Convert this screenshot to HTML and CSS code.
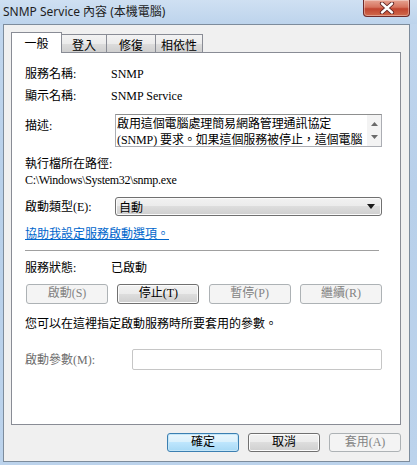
FILE: index.html
```html
<!DOCTYPE html>
<html>
<head>
<meta charset="utf-8">
<link rel="stylesheet" href="styles.css">
</head>
<body>
<div class="window">
  <div class="titlebar">
    <div class="title">SNMP Service 內容 (本機電腦)</div>
    <div class="close"><svg width="16" height="12" viewBox="0 0 16 12"><path d="M3 1.5 L13 10.5 M13 1.5 L3 10.5" stroke="#5a2020" stroke-width="4.2" stroke-linecap="round"/><path d="M3 1.5 L13 10.5 M13 1.5 L3 10.5" stroke="#fff" stroke-width="2.4" stroke-linecap="round"/></svg></div>
  </div>
  <div class="client">
    <div class="tabs">
      <div class="tab sel t1">一般</div>
      <div class="tab t2">登入</div>
      <div class="tab t3">修復</div>
      <div class="tab t4">相依性</div>
    </div>
    <div class="panel">
      <div class="row r-name"><span class="lbl">服務名稱:</span><span class="val">SNMP</span></div>
      <div class="row r-disp"><span class="lbl">顯示名稱:</span><span class="val">SNMP Service</span></div>
      <div class="row r-desc">
        <span class="lbl lbl-desc">描述:</span>
        <div class="desc">
          <div class="desc-text">啟用這個電腦處理簡易網路管理通訊協定<br>(SNMP) 要求。如果這個服務被停止，這個電腦</div>
          <div class="vscroll">
            <svg width="7" height="4" viewBox="0 0 7 4"><path d="M0 4 L3.5 0 L7 4Z" fill="#6a6a6a"/></svg>
            <svg width="7" height="4" viewBox="0 0 7 4"><path d="M0 0 L3.5 4 L7 0Z" fill="#6a6a6a"/></svg>
          </div>
        </div>
      </div>
      <div class="row r-pathlbl">執行檔所在路徑:</div>
      <div class="row r-path">C:\Windows\System32\snmp.exe</div>
      <div class="row r-type"><span class="lbl">啟動類型(E):</span>
        <div class="combo"><span>自動</span><svg width="8" height="5" viewBox="0 0 8 5"><path d="M0 0 L8 0 L4 5Z" fill="#1a1a1a"/></svg></div>
      </div>
      <div class="row r-link"><a class="link">協助我設定服務啟動選項。</a></div>
      <div class="sep"></div>
      <div class="row r-status"><span class="lbl">服務狀態:</span><span class="val">已啟動</span></div>
      <div class="btnrow">
        <div class="btn dis">啟動(S)</div>
        <div class="btn">停止(T)</div>
        <div class="btn dis">暫停(P)</div>
        <div class="btn dis">繼續(R)</div>
      </div>
      <div class="row r-hint">您可以在這裡指定啟動服務時所要套用的參數。</div>
      <div class="row r-param"><span class="lbl dlbl">啟動參數(M):</span><div class="input"></div></div>
    </div>
    <div class="footer">
      <div class="btn def">確定</div>
      <div class="btn">取消</div>
      <div class="btn dis">套用(A)</div>
    </div>
  </div>
</div>
</body>
</html>
```
FILE: styles.css
```css
* { box-sizing: border-box; }
html, body { margin: 0; padding: 0; }
body {
  width: 417px;
  height: 465px;
  overflow: hidden;
  background: linear-gradient(180deg, #c2d7ee 0%, #b8d0ea 40%, #bcd3ec 100%);
  font-family: "Liberation Serif", "Noto Sans CJK TC", serif;
  font-size: 12px;
  color: #000;
}
.window {
  display: flex;
  flex-direction: column;
  height: 465px;
}
.titlebar {
  height: 24px;
  display: flex;
  justify-content: space-between;
  align-items: flex-start;
  background: linear-gradient(180deg, #cfe0f2 0%, #bdd4ec 100%);
}
.title {
  padding: 5px 0 0 3px;
  font-family: "Noto Sans", "Noto Sans CJK TC", sans-serif;
  font-size: 12px;
  line-height: 14px;
  color: #1e1e1e;
}
.close {
  width: 47px;
  height: 17px;
  margin-right: 7px;
  border: 1px solid #6e2a2a;
  border-top: none;
  border-radius: 0 0 4px 4px;
  background: linear-gradient(180deg, #e6a392 0%, #d6735e 45%, #c14530 55%, #d06a4c 100%);
  display: flex;
  align-items: center;
  justify-content: center;
  box-shadow: inset 0 0 0 1px rgba(255,255,255,0.35);
}
.client {
  flex: 1;
  margin: 0 7px 3px 3px;
  border: 1px solid #7d8c9c;
  background: #f0f0f0;
  padding: 7px 8px 0 7px;
  display: flex;
  flex-direction: column;
}
.tabs {
  display: flex;
  align-items: flex-end;
  height: 20px;
}
.tab {
  height: 18px;
  border: 1px solid #898c95;
  border-bottom: none;
  border-left: none;
  background: linear-gradient(180deg, #f3f3f3 0%, #ebebeb 50%, #dddddd 50%, #cfcfcf 100%);
  font-family: "Noto Sans CJK TC", sans-serif;
  font-size: 12px;
  line-height: 17px;
  text-align: center;
  padding-top: 1px;
}
.tab.sel {
  height: 21px;
  border-left: 1px solid #898c95;
  background: #fff;
  position: relative;
  z-index: 1;
  margin-bottom: -1px;
  line-height: 18px;
}
.t1 { width: 51px; }
.t2 { width: 45px; }
.t3 { width: 49px; }
.t4 { width: 47px; }
.panel {
  height: 373px;
  border: 1px solid #898c95;
  background: #fff;
  padding: 13px 18px 0 13px;
  display: flex;
  flex-direction: column;
}
.row {
  height: 16px;
  line-height: 16px;
  display: flex;
  align-items: center;
  white-space: nowrap;
}
.lbl {
  width: 86px;
  flex: none;
}
.r-name { margin-bottom: 6px; }
.r-disp { margin-bottom: 10px; }
.r-desc {
  height: 33px;
  align-items: flex-start;
  margin-bottom: 9px;
}
.lbl-desc { width: 90px; padding-top: 4px; }
.desc {
  flex: 1;
  height: 33px;
  border: 1px solid #abadb3;
  border-top-color: #8e8f8f;
  display: flex;
  background: #fff;
}
.desc-text {
  flex: 1;
  height: 31px;
  padding: 1px 0 0 1px;
  line-height: 16px;
  font-size: 12px;
  white-space: nowrap;
  letter-spacing: -0.1px;
}
.vscroll {
  width: 14px;
  background: #f3f3f3;
  display: flex;
  flex-direction: column;
  align-items: center;
  justify-content: space-between;
  padding: 7px 0 7px 0;
}
.r-path { margin-bottom: 9px; font-size: 12px; letter-spacing: -0.3px; }
.r-type { height: 19px; margin-bottom: 9px; }
.r-type .lbl { width: 90px; }
.combo {
  flex: 1;
  height: 19px;
  border: 1px solid #707070;
  border-radius: 3px;
  background: linear-gradient(180deg, #f2f2f2 0%, #ebebeb 50%, #dddddd 50%, #cfcfcf 100%);
  box-shadow: inset 0 0 0 1px #fbfbfb;
  display: flex;
  align-items: center;
  justify-content: space-between;
  padding: 0 6px 0 3px;
  font-family: "Noto Sans CJK TC", sans-serif;
  line-height: 17px;
}
.r-link { margin-bottom: 9px; }
.link {
  color: #0066cc;
  text-decoration: underline;
  font-family: "Noto Sans CJK TC", sans-serif;
}
.sep {
  height: 1px;
  width: 354px;
  background: #a0a0a0;
  margin-bottom: 9px;
}
.r-status { margin-bottom: 8px; }
.btnrow {
  display: flex;
  justify-content: space-between;
  height: 20px;
  margin: 0 0 12px 1px;
}
.btnrow .btn { width: 82px; }
.btn {
  height: 20px;
  border: 1px solid #707070;
  border-radius: 3px;
  background: linear-gradient(180deg, #f2f2f2 0%, #ebebeb 50%, #dddddd 50%, #cfcfcf 100%);
  box-shadow: inset 0 0 0 1px #fcfcfc;
  text-align: center;
  line-height: 17px;
  font-size: 12px;
  white-space: nowrap;
}
.btn.dis {
  border-color: #adb2b5;
  background: #f4f4f4;
  box-shadow: none;
  color: #838383;
}
.btn.def {
  border-color: #3c7fb1;
  background: linear-gradient(180deg, #eaf6fd 0%, #d9f0fc 50%, #bee6fd 50%, #a7d9f5 100%);
  box-shadow: inset 0 0 0 1px #c4e6f8;
}
.r-hint { margin-bottom: 17px; }
.r-param { height: 21px; }
.dlbl { width: 107px; color: #6d6d6d; }
.input {
  flex: 1;
  height: 21px;
  border: 1px solid #c6c6c6;
  border-radius: 2px;
  background: #fff;
}
.footer {
  display: flex;
  justify-content: flex-end;
  gap: 9px;
  margin-top: 8px;
}
.footer .btn { width: 72px; height: 19px; }
```
